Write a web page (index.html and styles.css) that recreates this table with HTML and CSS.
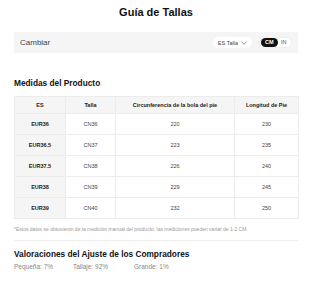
FILE: index.html
```html
<!DOCTYPE html>
<html lang="es">
<head>
<meta charset="utf-8">
<link rel="stylesheet" href="styles.css">
</head>
<body>
<div class="page">
  <h1 class="title">Guía de Tallas</h1>
  <div class="bar">
    <span class="bar-label">Cambiar</span>
    <div class="bar-right">
      <span class="select">ES Talla
        <svg width="6" height="4" viewBox="0 0 6 4"><path d="M0.5 0.8 L3 3.2 L5.5 0.8" fill="none" stroke="#666" stroke-width="0.7"/></svg>
      </span>
      <span class="toggle"><span class="opt on">CM</span><span class="opt">IN</span></span>
    </div>
  </div>
  <h2 class="section">Medidas del Producto</h2>
  <table class="sizes">
    <thead>
      <tr><th class="c1">ES</th><th class="c2">Talla</th><th class="c3">Circunferencia de la bola del pie</th><th class="c4">Longitud de Pie</th></tr>
    </thead>
    <tbody>
      <tr><td class="es">EUR36</td><td>CN36</td><td>220</td><td>230</td></tr>
      <tr><td class="es">EUR36.5</td><td>CN37</td><td>223</td><td>235</td></tr>
      <tr><td class="es">EUR37.5</td><td>CN38</td><td>226</td><td>240</td></tr>
      <tr><td class="es">EUR38</td><td>CN39</td><td>229</td><td>245</td></tr>
      <tr><td class="es">EUR39</td><td>CN40</td><td>232</td><td>250</td></tr>
    </tbody>
  </table>
  <p class="note">*Estos datos se obtuvieron de la medición manual del producto, las mediciones pueden variar de 1-2 CM.</p>
  <h2 class="section fit-title">Valoraciones del Ajuste de los Compradores</h2>
  <div class="fit">
    <span class="fit-item">Pequeña: 7%</span>
    <span class="fit-item">Tallaje: 92%</span>
    <span class="fit-item">Grande: 1%</span>
  </div>
</div>
</body>
</html>
```
FILE: styles.css
```css
* { box-sizing: border-box; }
html, body { margin: 0; padding: 0; background: #fff; }
body { font-family: "Liberation Sans", Arial, sans-serif; color: #222; }
.page { width: 284px; margin-left: 14px; }
.title {
  margin: 0;
  padding-top: 5px;
  height: 32px;
  font-size: 11px;
  line-height: 14px;
  font-weight: bold;
  text-align: center;
  color: #111;
}
.bar {
  height: 21px;
  background: #f5f5f5;
  display: flex;
  align-items: center;
  justify-content: space-between;
  padding: 0 6px 0 6px;
}
.bar-label { font-size: 8px; color: #444; }
.bar-right { display: flex; align-items: center; gap: 7px; }
.select {
  display: flex; align-items: center; gap: 3px;
  height: 11px; padding: 0 5px;
  background: #fff; border-radius: 6px;
  font-size: 5.5px; color: #444;
}
.toggle {
  display: flex; align-items: center;
  height: 11px; padding: 1px;
  background: #fff; border: 0.5px solid #eee; border-radius: 6px;
}
.opt { font-size: 5.5px; padding: 0 3.5px; color: #555; line-height: 9px; }
.opt.on { background: #111; color: #fff; border-radius: 5px; font-weight: bold; padding: 0 4px; }
.section {
  margin: 0;
  padding-top: 24px;
  font-size: 8.3px;
  line-height: 12px;
  font-weight: bold;
  color: #111;
}
.sizes {
  margin-top: 7px;
  width: 284px;
  border-collapse: collapse;
  table-layout: fixed;
  font-size: 5.5px;
  color: #444;
}
.sizes th, .sizes td { border: 0.5px solid #ececec; text-align: center; padding: 0; }
.sizes th { height: 17px; background: #f5f5f5; font-weight: bold; color: #222; }
.sizes td { height: 21px; }
.sizes td.es { background: #f5f5f5; font-weight: bold; color: #222; }
.c1 { width: 51px; }
.c2 { width: 50px; }
.c3 { width: 119px; }
.c4 { width: 64px; }
.note {
  margin: 0;
  padding: 7px 0 8px;
  font-size: 5px;
  line-height: 6px;
  color: #999;
  border-bottom: 0.5px solid #eee;
}
.fit-title { padding-top: 7px; font-size: 8.3px; }
.fit { display: flex; padding-top: 3px; font-size: 6.5px; line-height: 8px; color: #888; }
.fit-item:nth-child(1) { width: 59px; }
.fit-item:nth-child(2) { width: 61px; }
```
